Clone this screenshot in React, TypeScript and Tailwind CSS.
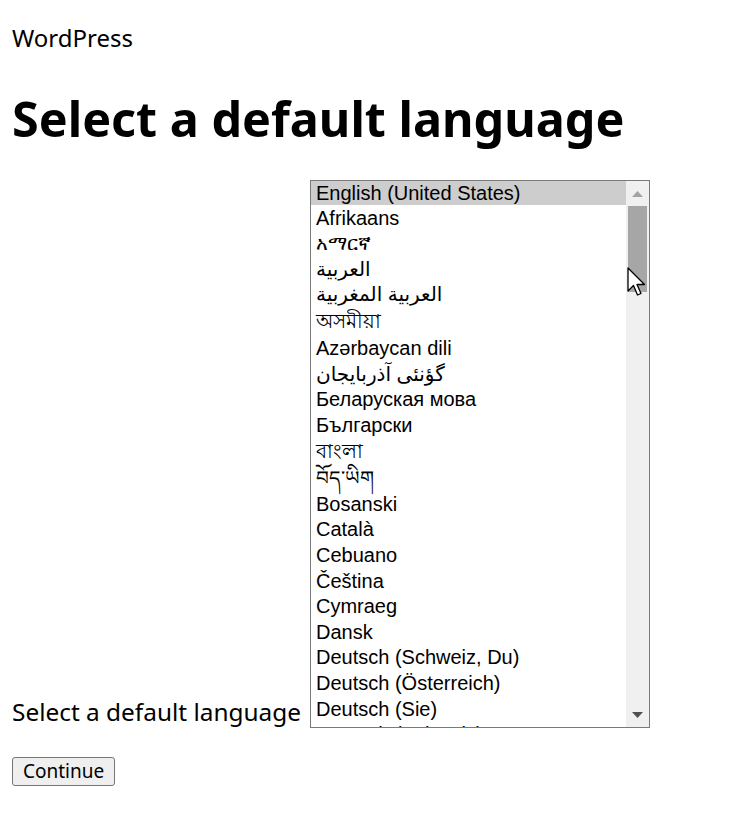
import React from "react";

type Lang = { label: string; h: number; dir?: "rtl" };

// row heights follow the spacing in the list (script rows sit taller)
const languages: Lang[] = [
  { label: "English (United States)", h: 24 },
  { label: "Afrikaans", h: 25 },
  { label: "አማርኛ", h: 26 },
  { label: "العربية", h: 25, dir: "rtl" },
  { label: "العربية المغربية", h: 26, dir: "rtl" },
  { label: "অসমীয়া", h: 28 },
  { label: "Azərbaycan dili", h: 26 },
  { label: "گؤنئی آذربایجان", h: 25, dir: "rtl" },
  { label: "Беларуская мова", h: 26 },
  { label: "Български", h: 25 },
  { label: "বাংলা", h: 27 },
  { label: "བོད་ཡིག", h: 28 },
  { label: "Bosanski", h: 24 },
  { label: "Català", h: 26 },
  { label: "Cebuano", h: 26 },
  { label: "Čeština", h: 25 },
  { label: "Cymraeg", h: 26 },
  { label: "Dansk", h: 25 },
  { label: "Deutsch (Schweiz, Du)", h: 26 },
  { label: "Deutsch (Österreich)", h: 26 },
  { label: "Deutsch (Sie)", h: 25 },
  { label: "Deutsch (Schweiz)", h: 25 },
];

function LanguageList() {
  return (
    <div className="relative flex h-[548px] w-[340px] border border-[#7a7a7a] bg-white">
      {/* options */}
      <div className="flex-1 overflow-hidden">
        {languages.map((l, i) => (
          <div
            key={l.label}
            style={{ height: l.h }}
            className={
              "flex items-center pl-[5px] text-[20px] leading-none text-black whitespace-nowrap font-['Liberation_Sans','DejaVu_Sans',sans-serif] " +
              (i === 0 ? "bg-[#cdcdcd]" : "")
            }
          >
            <span dir={l.dir}>{l.label}</span>
          </div>
        ))}
      </div>

      {/* scrollbar */}
      <div className="flex w-[23px] flex-col bg-[#f0f0f0]">
        <div className="flex h-[25px] items-center justify-center">
          <svg width="11" height="6" viewBox="0 0 11 6">
            <path d="M0 6 L5.5 0 L11 6 Z" fill="#a3a3a3" />
          </svg>
        </div>
        <div className="mx-[2px] h-[86px] bg-[#a6a6a6]" />
        <div className="flex-1" />
        <div className="flex h-[25px] items-center justify-center">
          <svg width="11" height="6" viewBox="0 0 11 6">
            <path d="M0 0 L11 0 L5.5 6 Z" fill="#505050" />
          </svg>
        </div>
      </div>

      {/* mouse pointer resting on the scrollbar */}
      <svg
        className="absolute left-[316px] top-[86px]"
        width="20"
        height="32"
        viewBox="0 0 20 32"
      >
        <path
          d="M1 1 L1 24 L6.5 18.5 L10.5 28 L14 26.5 L10 17.5 L17.5 17.5 Z"
          fill="#fff"
          stroke="#000"
          strokeWidth="1.3"
          strokeLinejoin="round"
        />
      </svg>
    </div>
  );
}

export default function App() {
  return (
    <div className="min-h-[839px] bg-white px-[12px] text-black font-['Noto_Sans','Open_Sans',sans-serif]">
      <p className="pt-[22px] text-[24px] leading-[32px]">WordPress</p>

      <h1 className="mt-[36px] text-[48.5px] font-bold leading-[56px]">
        Select a default language
      </h1>

      <form className="mt-[34px]">
        <div className="flex items-end gap-[9px]">
          <label className="text-[24.4px] leading-[32px]">
            Select a default language
          </label>
          <LanguageList />
        </div>

        <button
          type="button"
          className="mt-[29px] h-[29px] w-[103px] rounded-[3px] border border-[#767676] bg-[#efefef] text-[19px] leading-none text-black"
        >
          Continue
        </button>
      </form>
    </div>
  );
}
